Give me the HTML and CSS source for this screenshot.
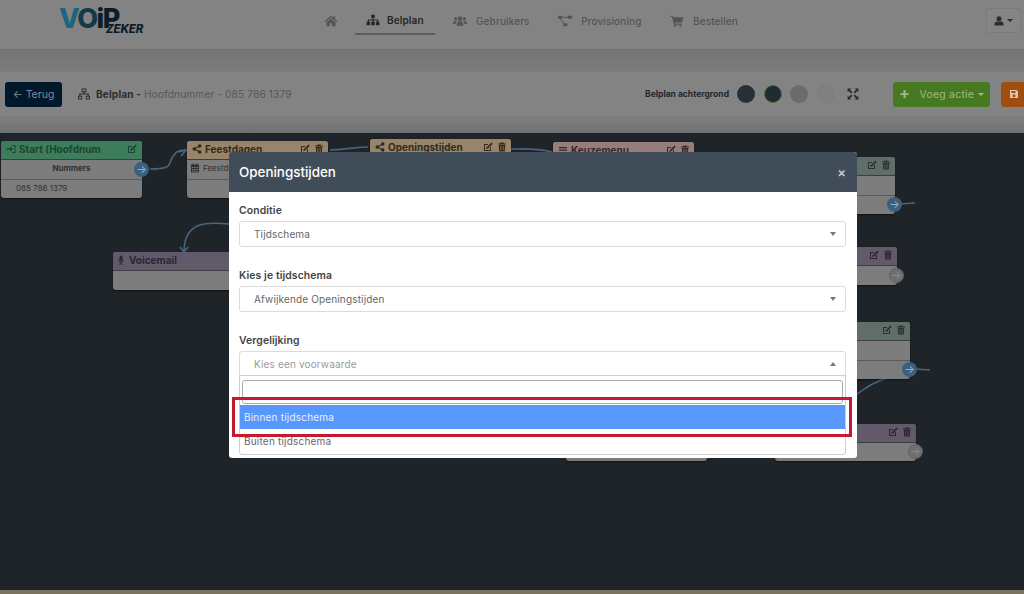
FILE: index.html
```html
<!DOCTYPE html>
<html lang="nl">
<head>
    <meta charset="UTF-8">
    <title>Belplan</title>
    <link rel="stylesheet" href="styles.css">
</head>
<body>
    <svg class="icon-defs" width="0" height="0">
        <symbol id="i-home" viewBox="0 0 24 20"><path d="M12 1 1 10.500l1.300 1.500L12 3.800 21.700 12l1.300-1.500-4-3.400V2h-3v2.500zM4.500 12.200V19h5.500v-5h4v5h5.500v-6.800L12 5.800z"/></symbol>
        <symbol id="i-sitemap" viewBox="0 0 24 20"><path d="M9 1h6v5h-2v3h8v4h2v6h-6v-6h2v-2h-6v2h2v6H9v-6h2v-2H5v2h2v6H1v-6h2V9h8V6H9z"/></symbol>
        <symbol id="i-users" viewBox="0 0 24 20"><circle cx="4.500" cy="6" r="2.700"/><circle cx="19.500" cy="6" r="2.700"/><circle cx="12" cy="6" r="4"/><path d="M0 15c0-4 2-5.500 4.500-5.500 1 0 1.700.3 2.300.8C5.300 11.500 4.700 13 4.500 15zM24 15c0-4-2-5.500-4.500-5.500-1 0-1.700.3-2.300.8 1.500 1.200 2.100 2.700 2.300 4.700zM6 18c0-5 2.500-7.500 6-7.500s6 2.500 6 7.500z"/></symbol>
        <symbol id="i-diagram" viewBox="0 0 24 20"><path d="M0 1h7v5H0zM17 1h7v5h-7zM9 14h7v5H9zM7 2.700h10v1.600H7zM3 6h1.600l6.400 8h-2z"/></symbol>
        <symbol id="i-cart" viewBox="0 0 24 20"><path d="M1 1h4l.6 2.500H23l-2.200 9H8l.4 1.800H20v2H6.800L3.500 3H1z"/><circle cx="8.500" cy="18" r="1.800"/><circle cx="18" cy="18" r="1.800"/></symbol>
        <symbol id="i-user" viewBox="0 0 20 20"><circle cx="10" cy="5.500" r="5"/><path d="M1 19v-2.500C1 13 3.500 11 6 11h8c2.500 0 5 2 5 5.500V19z"/></symbol>
        <symbol id="i-network" viewBox="0 0 20 20"><path fill-rule="evenodd" d="M6 1h8v6h-3v2h7v4h2v6h-7v-6h3v-2H4v2h3v6H0v-6h2V9h7V7H6zm1.500 1.500v3h5v-3zM1.500 14.500v3h4v-3zM14.500 14.500v3h4v-3z"/></symbol>
        <symbol id="i-edit" viewBox="0 0 20 20"><path d="M2 4h9l-2 2H4v10h10v-5l2-2v9H2z"/><path d="M17 1l2.500 2.500L10 13l-3.500 1 1-3.500z"/></symbol>
        <symbol id="i-trash" viewBox="0 0 20 20"><path fill-rule="evenodd" d="M7 1h6l1 2h4v2H2V3h4zM3.500 6h13l-1 13h-11zM7 8v9h1.500V8zm4.500 0v9H13V8z"/></symbol>
        <symbol id="i-share" viewBox="0 0 20 20"><circle cx="15.500" cy="4" r="3.500"/><circle cx="15.500" cy="16" r="3.500"/><circle cx="4.500" cy="10" r="3.500"/><path d="M4 9l11-6 1 1.800-11 6zM5 9l11 6-1 1.800-11-6z"/></symbol>
        <symbol id="i-signin" viewBox="0 0 20 20"><path d="M1 8.500h7V4.500l6 5.500-6 5.500v-4H1zM12 2h7v16h-7v-2h5V4h-5z"/></symbol>
        <symbol id="i-calendar" viewBox="0 0 20 20"><path fill-rule="evenodd" d="M2 3h3V1h2v2h6V1h2v2h3v16H2zM4 8v2h3V8zm4.500 0v2h3V8zm4.500 0v2h3V8zM4 12v2h3v-2zm4.500 0v2h3v-2zm4.500 0v2h3v-2zM4 15.500v2h3v-2zm4.500 0v2h3v-2zm4.500 0v2h3v-2z"/></symbol>
        <symbol id="i-mic" viewBox="0 0 20 20"><rect x="7" y="1" width="6" height="11" rx="3"/><path d="M4 9h1.500c0 3 2 4.500 4.500 4.500s4.500-1.500 4.500-4.500H16c0 3.500-2.200 5.500-5 6v2.500h3V19H6v-1.500h3V15c-2.800-.5-5-2.500-5-6z"/></symbol>
        <symbol id="i-bars" viewBox="0 0 20 20"><path d="M2 4h16v2.400H2zM2 9h16v2.400H2zM2 14h16v2.400H2z"/></symbol>
        <symbol id="i-expand" viewBox="0 0 20 20"><path d="M1 1h6L5 3l4 4-2 2-4-4-2 2zM19 1v6l-2-2-4 4-2-2 4-4-2-2zM1 19v-6l2 2 4-4 2 2-4 4 2 2zM19 19h-6l2-2-4-4 2-2 4 4 2-2z"/></symbol>
        <symbol id="i-save" viewBox="0 0 20 20"><path fill-rule="evenodd" d="M2 2h13l3 3v13H2zM5 4v4h8V4zM10 10.500a3 3 0 1 0 0 6 3 3 0 0 0 0-6z"/></symbol>
    </svg>

    <header class="topbar">
        <div class="logo"><span class="logo-v">V</span><span class="logo-o">O</span><span class="logo-ip">iP</span><span class="logo-zeker">ZEKER</span></div>
        <nav class="nav">
            <a class="nav-item nav-home"><svg class="nav-icon"><use href="#i-home"/></svg></a>
            <a class="nav-item active"><svg class="nav-icon"><use href="#i-sitemap"/></svg>Belplan</a>
            <a class="nav-item"><svg class="nav-icon"><use href="#i-users"/></svg>Gebruikers</a>
            <a class="nav-item"><svg class="nav-icon"><use href="#i-diagram"/></svg>Provisioning</a>
            <a class="nav-item"><svg class="nav-icon"><use href="#i-cart"/></svg>Bestellen</a>
        </nav>
        <button class="user-btn"><svg class="user-icon"><use href="#i-user"/></svg><span class="caret"></span></button>
    </header>

    <div class="band"></div>

    <section class="toolbar">
        <button class="btn btn-back">&#8592; Terug</button>
        <div class="page-title">
            <svg class="title-icon"><use href="#i-network"/></svg>
            <b>Belplan -</b>
            <span>Hoofdnummer - 085 786 1379</span>
        </div>
        <div class="bg-picker">
            <span class="bg-label">Belplan achtergrond</span>
            <span class="dot dot-1"></span>
            <span class="dot dot-2"></span>
            <span class="dot dot-3"></span>
            <span class="dot dot-4"></span>
            <svg class="expand-icon"><use href="#i-expand"/></svg>
        </div>
        <button class="btn btn-add"><span class="plus">+</span> Voeg actie <span class="caret caret-add"></span></button>
        <button class="btn btn-save"><svg class="save-icon"><use href="#i-save"/></svg></button>
    </section>

    <div class="band band-low"></div>

    <main class="canvas">
        <svg class="wires" width="1024" height="457" viewBox="0 133 1024 457">
            <path d="M150 169c24 0 18-5 22-11s5-8 14-8"/>
            <path d="M178 152l8-2-5 6"/>
            <path d="M330 150c15 0 20-3 38-3"/>
            <path d="M511 149c15 0 25-1 41 3"/>
            <path d="M229 224c-20-2-45-4-45 28"/>
            <path d="M180 247l4 5 4-5"/>
            <path d="M900 204l15-1"/>
            <path d="M915 369l15 1"/>
            <path d="M856 395c10-8 20-14 32-17"/>
        </svg>

        <div class="node node-start">
            <div class="node-head head-green"><svg class="ico"><use href="#i-signin"/></svg><span class="node-name">Start (Hoofdnum</span><svg class="ico ico-edit"><use href="#i-edit"/></svg></div>
            <div class="node-row row-bold">Nummers</div>
            <div class="node-row row-num">085 786 1379</div>
            <span class="port port-blue">&#8594;</span>
        </div>
        <div class="node node-feest">
            <div class="node-head head-tan"><svg class="ico"><use href="#i-share"/></svg><span class="node-name">Feestdagen</span><svg class="ico ico-edit"><use href="#i-edit"/></svg><svg class="ico"><use href="#i-trash"/></svg></div>
            <div class="node-row row-date"><svg class="ico"><use href="#i-calendar"/></svg>Feestda</div>
            <div class="node-row"></div>
        </div>
        <div class="node node-open">
            <div class="node-head head-tan"><svg class="ico"><use href="#i-share"/></svg><span class="node-name">Openingstijden</span><svg class="ico ico-edit"><use href="#i-edit"/></svg><svg class="ico"><use href="#i-trash"/></svg></div>
        </div>
        <div class="node node-keuze">
            <div class="node-head head-pink"><svg class="ico"><use href="#i-bars"/></svg><span class="node-name">Keuzemenu</span><svg class="ico ico-edit"><use href="#i-edit"/></svg><svg class="ico"><use href="#i-trash"/></svg></div>
        </div>
        <div class="node node-voice">
            <div class="node-head head-purple"><svg class="ico"><use href="#i-mic"/></svg><span class="node-name">Voicemail</span></div>
            <div class="node-row"></div>
        </div>
        <div class="node node-r1">
            <div class="node-head head-sage"><span class="node-name"></span><svg class="ico ico-edit"><use href="#i-edit"/></svg><svg class="ico"><use href="#i-trash"/></svg></div>
            <div class="node-row"></div>
            <div class="node-row"></div>
            <span class="port port-blue">&#8594;</span>
        </div>
        <div class="node node-r2">
            <div class="node-head head-purple"><span class="node-name"></span><svg class="ico ico-edit"><use href="#i-edit"/></svg><svg class="ico"><use href="#i-trash"/></svg></div>
            <div class="node-row"></div>
            <span class="port port-grey">&#8594;</span>
        </div>
        <div class="node node-r3">
            <div class="node-head head-sage"><span class="node-name"></span><svg class="ico ico-edit"><use href="#i-edit"/></svg><svg class="ico"><use href="#i-trash"/></svg></div>
            <div class="node-row"></div>
            <div class="node-row"></div>
            <span class="port port-blue">&#8594;</span>
        </div>
        <div class="node node-r4">
            <div class="node-head head-purple"><span class="node-name"></span><svg class="ico ico-edit"><use href="#i-edit"/></svg><svg class="ico"><use href="#i-trash"/></svg></div>
            <div class="node-row"></div>
            <span class="port port-grey">&#8594;</span>
        </div>
        <div class="node node-low"></div>
    </main>

    <div class="bottom-strip"></div>

    <div class="modal">
        <div class="modal-head">
            <h2>Openingstijden</h2>
            <span class="modal-close">&times;</span>
        </div>
        <div class="modal-body">
            <label class="field-label">Conditie</label>
            <div class="select"><span>Tijdschema</span><span class="select-arrow"></span></div>
            <label class="field-label">Kies je tijdschema</label>
            <div class="select"><span>Afwijkende Openingstijden</span><span class="select-arrow"></span></div>
            <label class="field-label">Vergelijking</label>
            <div class="select select-open"><span>Kies een voorwaarde</span><span class="select-arrow arrow-up"></span></div>
            <div class="dropdown">
                <div class="dropdown-search"></div>
                <div class="option option-active">Binnen tijdschema</div>
                <div class="option">Buiten tijdschema</div>
            </div>
        </div>
        <div class="callout"></div>
    </div>
</body>
</html>
```

FILE: styles.css
```css
* {
    margin: 0;
    padding: 0;
    box-sizing: border-box;
}

html, body {
    height: 100%;
}

body {
    display: flex;
    flex-direction: column;
    height: 594px;
    overflow: hidden;
    background: #1f2429;
    font-family: Inter, "Liberation Sans", sans-serif;
    color: #4c4c4c;
    position: relative;
}

.icon-defs {
    position: absolute;
}

svg {
    fill: currentColor;
}

/* top bar */
.topbar {
    display: flex;
    align-items: flex-start;
    flex: 0 0 50px;
    position: relative;
    background: #838383;
    border-bottom: 1px solid #6f7071;
}

.logo {
    width: 185px;
    padding: 5px 0 0 59px;
    font-weight: 800;
    font-size: 27px;
    line-height: 28px;
    letter-spacing: -1.5px;
    white-space: nowrap;
    color: #0c1c28;
}

.logo-v {
    color: #1b6580;
}

.logo-o {
    color: #123a4c;
}

.logo-zeker {
    display: inline-block;
    font-size: 11.500px;
    font-style: italic;
    letter-spacing: -0.1px;
    line-height: 10px;
    margin-left: -13px;
    vertical-align: -5px;
}

.nav {
    display: flex;
    margin-left: 139px;
    height: 35px;
}

.nav-item {
    display: flex;
    align-items: center;
    padding-top: 6px;
    margin-right: 28.500px;
    font-size: 10px;
    font-weight: 500;
    letter-spacing: 0.12px;
    color: #545454;
    height: 35px;
}

.nav-home {
    margin-right: 18px;
    width: 13px;
}

.nav-item.active {
    color: #262626;
    font-weight: 600;
    border-bottom: 2px solid #5c5d5e;
    padding-left: 11px;
    padding-right: 11px;
    width: 80px;
    margin-right: 18px;
}

.nav-icon {
    width: 14px;
    height: 12px;
    margin-right: 9px;
    flex-shrink: 0;
}

.nav-item.active .nav-icon {
    margin-right: 7px;
}

.nav-home .nav-icon {
    margin-right: 0;
}

.user-btn {
    position: absolute;
    left: 986px;
    top: 8px;
    width: 35px;
    height: 25px;
    display: flex;
    align-items: center;
    justify-content: center;
    gap: 3px;
    background: #858585;
    border: 1px solid #7a7a7a;
    border-radius: 3px;
    color: #2c2c2c;
}

.user-icon {
    width: 10px;
    height: 10px;
}

.caret {
    border-top: 3px solid currentColor;
    border-left: 3px solid transparent;
    border-right: 3px solid transparent;
}

/* bands and toolbar */
.band {
    flex: 0 0 22px;
    background: linear-gradient(#737475, #7b7c7d);
}

.band-low {
    flex: 0 0 16px;
    background: linear-gradient(#7f7f80, #6f7071);
}

.toolbar {
    display: flex;
    align-items: center;
    flex: 0 0 45px;
    padding-left: 5px;
    background: #838383;
    border-bottom: 1px solid #7a7a7a;
}

.btn {
    height: 25px;
    border: none;
    border-radius: 3px;
    font-family: inherit;
    font-size: 10.500px;
    white-space: nowrap;
}

.btn-back {
    width: 57px;
    background: #02192b;
    color: #7f8d98;
}

.page-title {
    display: flex;
    align-items: center;
    margin-left: 16px;
    font-size: 10.200px;
    letter-spacing: 0.1px;
    white-space: nowrap;
    color: #565656;
}

.page-title b {
    color: #2e2e2e;
    font-weight: 700;
    margin-right: 3px;
}

.title-icon {
    width: 12px;
    height: 12px;
    margin-right: 6px;
    color: #2e2e2e;
}

.bg-picker {
    display: flex;
    align-items: center;
    margin-left: auto;
    margin-right: 34px;
}

.bg-label {
    font-size: 8.500px;
    font-weight: 700;
    color: #1d2830;
    margin-right: 8px;
}

.dot {
    width: 18px;
    height: 18px;
    border-radius: 50%;
    margin-right: 8.500px;
}

.dot-1 {
    background: #263039;
}

.dot-2 {
    background: #1f2b33;
    border: 1px solid #55663a;
}

.dot-3 {
    background: #6c6c6c;
}

.dot-4 {
    background: #808080;
    border: 1px solid #7c7c7c;
}

.expand-icon {
    width: 12px;
    height: 12px;
    margin-left: 4px;
    color: #1f2a33;
}

.btn-add {
    width: 97px;
    background: #477a20;
    color: #9db98a;
    letter-spacing: 0.2px;
}

.plus {
    font-size: 17px;
    line-height: 10px;
    font-weight: 600;
    margin-right: 6px;
    vertical-align: -1px;
}

.caret-add {
    display: inline-block;
    vertical-align: 2px;
    margin-left: 1px;
}

.btn-save {
    width: 23px;
    margin-left: 11px;
    padding: 3px 0 0 2px;
    border-radius: 3px 0 0 3px;
    background: #a04e10;
    color: #dcc4af;
}

.save-icon {
    width: 10px;
    height: 10px;
}

/* canvas */
.canvas {
    flex: 1;
    position: relative;
    background: #1f2429;
}

.wires {
    position: absolute;
    left: 0;
    top: 0;
}

.wires path {
    fill: none;
    stroke: #4a6580;
    stroke-width: 1.600;
}

.node {
    position: absolute;
    width: 141px;
    display: flex;
    flex-direction: column;
    background: #7c7c7c;
    border-radius: 3px;
    box-shadow: 0 1px 2px rgba(0, 0, 0, 0.5);
}

.node-start { left: 1px; top: 8px; height: 57px; }
.node-feest { left: 187px; top: 8px; height: 57px; }
.node-open { left: 370px; top: 6px; height: 40px; }
.node-keuze { left: 553px; top: 9px; height: 40px; }
.node-voice { left: 113px; top: 119px; height: 38px; }
.node-r1 { left: 754px; top: 24px; height: 57px; }
.node-r2 { left: 756px; top: 114px; height: 38px; }
.node-r3 { left: 769px; top: 189px; height: 57px; }
.node-r4 { left: 775px; top: 291px; height: 37px; }
.node-low { left: 566px; top: 300px; height: 28px; }

.node-head {
    display: flex;
    align-items: center;
    gap: 3px;
    flex: 0 0 19px;
    padding: 0 4px 3px 5px;
    border-radius: 3px 3px 0 0;
    border-bottom: 1px solid #3c3e40;
    font-weight: 700;
    font-size: 10px;
    white-space: nowrap;
}

.node-name {
    flex: 1;
}

.node-voice .ico {
    margin-left: -2px;
}

.ico {
    width: 10px;
    height: 10px;
    flex-shrink: 0;
}

.ico-edit {
    margin-right: 1px;
}

.head-green { background: #3d7d5c; color: #1a4530; }
.head-tan { background: #978469; color: #332a1b; }
.head-pink { background: #977c7c; color: #382727; }
.head-purple { background: #625a6b; color: #2a2433; }
.head-sage { background: #5f6e68; color: #28332e; }

.node-row {
    flex: 1;
    display: flex;
    align-items: center;
    padding-bottom: 2px;
    border-bottom: 1px solid #5b5b5b;
    font-size: 8px;
    color: #303030;
}

.node-row:last-of-type {
    border-bottom: none;
}

.row-bold {
    justify-content: center;
    font-weight: 700;
}

.row-num {
    padding-left: 15px;
}

.row-date {
    gap: 3px;
    padding-left: 3px;
}

.port {
    position: absolute;
    right: -7px;
    bottom: 2px;
    width: 15px;
    height: 15px;
    border-radius: 50%;
    display: flex;
    align-items: center;
    justify-content: center;
    font-size: 11px;
    line-height: 1;
}

.node-start .port {
    bottom: 21px;
}

.port-blue {
    background: #3a5f80;
    color: #9aaec0;
}

.port-grey {
    background: #6f6f6f;
    color: #8b8b8b;
    border: 1px solid #5f5f5f;
}

.bottom-strip {
    flex: 0 0 4px;
    background: #79735f;
}

/* modal */
.modal {
    position: absolute;
    left: 229px;
    top: 152px;
    width: 628px;
    height: 306px;
    background: #fff;
    border-radius: 3px;
}

.modal-head {
    display: flex;
    align-items: center;
    justify-content: space-between;
    height: 40px;
    padding: 0 11px 0 10px;
    background: #414c59;
    color: #fff;
    border-radius: 3px 3px 0 0;
}

.modal-head h2 {
    font-size: 13.400px;
    font-weight: 500;
}

.modal-close {
    font-size: 13px;
    font-weight: 600;
    color: #c8ccd0;
}

.modal-body {
    padding: 13px 11px 0 10px;
}

.field-label {
    display: block;
    height: 16px;
    font-size: 10.400px;
    font-weight: 600;
    letter-spacing: 0.1px;
    color: #444;
    line-height: 12px;
}

.select {
    display: flex;
    align-items: center;
    justify-content: space-between;
    height: 26px;
    margin-bottom: 23px;
    padding: 0 9px 0 14px;
    border: 1px solid #dcdcdc;
    border-radius: 3px;
    font-size: 10px;
    letter-spacing: 0.15px;
    color: #666;
}

.select-open {
    margin-bottom: 0;
    color: #9a9a9a;
    border-radius: 3px 3px 0 0;
}

.select-arrow {
    border-top: 4px solid #777;
    border-left: 3.500px solid transparent;
    border-right: 3.500px solid transparent;
}

.arrow-up {
    border-top: none;
    border-bottom: 4px solid #777;
}

.dropdown {
    height: 80px;
    margin-top: -2px;
    padding-top: 4px;
    border: 1px solid #cfcfcf;
    border-radius: 0 0 3px 3px;
    background: #fff;
}

.dropdown-search {
    height: 24px;
    margin: 0 2px 1px 2px;
    border: 1px solid #aaa;
    border-radius: 3px;
}

.option {
    display: flex;
    align-items: center;
    height: 24px;
    padding-left: 4px;
    font-size: 10px;
    letter-spacing: 0.2px;
    color: #666;
}

.option-active {
    background: #5897fb;
    color: #e8f1ff;
}

.callout {
    position: absolute;
    left: 3px;
    top: 245px;
    width: 620px;
    height: 40px;
    border: 3px solid #c8172e;
}
```
